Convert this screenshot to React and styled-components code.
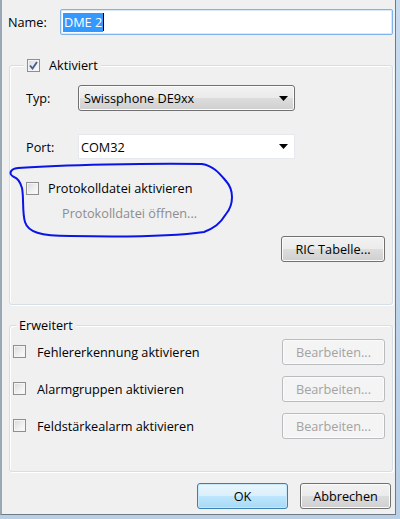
import React from 'react';
import styled, { createGlobalStyle } from 'styled-components';

const Global = createGlobalStyle`
  html, body {
    margin: 0;
    padding: 0;
    background: #f0f0f0;
  }
  body {
    font-family: "Open Sans", "Liberation Sans", Arial, sans-serif;
    font-size: 12.7px;
    color: #000;
  }
`;

const Frame = styled.div`
  width: 400px;
  height: 519px;
  box-sizing: border-box;
  display: flex;
  padding: 0 4px 4px 0;
  background: linear-gradient(180deg, #c9dcef, #b8cfe6);
`;

const Client = styled.div`
  position: relative;
  flex: 1;
  display: flex;
  flex-direction: column;
  box-sizing: border-box;
  padding: 9px 2px 0 6px;
  background: #f0f0f0;
  border-left: 2px solid #9aa8b5;
  border-right: 1px solid #6e7a85;
  border-bottom: 1px solid #6e7a85;
`;

const Row = styled.div`
  display: flex;
  align-items: center;
  height: ${p => p.h || 26}px;
  margin-top: ${p => p.mt || 0}px;
`;

const Label = styled.span`
  width: ${p => p.w}px;
  flex: none;
`;

const TextInput = styled.div`
  flex: 1;
  height: 26px;
  box-sizing: border-box;
  display: flex;
  align-items: center;
  padding-left: 2px;
  background: #fff;
  border: 1px solid #7eb4ea;
  box-shadow: inset 0 0 0 1px #d7e8f8;
  border-radius: 2px;
`;

const Selected = styled.span`
  background: #3399ff;
  color: #fff;
  padding: 1px 1px 2px;
  line-height: 16px;
`;

const Caret = styled.span`
  width: 1px;
  height: 18px;
  background: #000;
`;

const Group = styled.div`
  position: relative;
  margin-top: ${p => p.mt}px;
  margin-left: ${p => p.ml || 0}px;
  width: ${p => p.w}px;
  box-sizing: border-box;
  border: 1px solid #d5dfe5;
  border-radius: 3px;
  box-shadow: inset 1px 1px 0 #fff, 1px 1px 0 #fff;
  padding: ${p => p.pad};
  display: flex;
  flex-direction: column;
`;

const Caption = styled.div`
  position: absolute;
  top: -9px;
  left: ${p => p.left}px;
  display: flex;
  align-items: center;
  gap: 9px;
  height: 16px;
  padding: 0 3px;
  background: #f0f0f0;
`;

const Box = styled.span`
  width: 13px;
  height: 13px;
  flex: none;
  box-sizing: border-box;
  display: flex;
  align-items: center;
  justify-content: center;
  border: 1px solid #8e8f8f;
  background: linear-gradient(135deg, #d9d9d9 0%, #f1f1f1 60%, #fdfdfd 100%);
  box-shadow: inset 0 0 0 1px #f4f4f4;
`;

const CheckRow = styled.label`
  display: flex;
  align-items: center;
  gap: ${p => p.gap || 9}px;
  height: 16px;
  margin-top: ${p => p.mt || 0}px;
`;

const Check = ({ checked }) => (
  <Box>
    {checked && (
      <svg width="9" height="9" viewBox="0 0 9 9">
        <path d="M1 4.5 L3.5 7.5 L8 1" fill="none" stroke="#4a5d94" strokeWidth="1.9" />
      </svg>
    )}
  </Box>
);

const Arrow = () => (
  <svg width="9" height="5" viewBox="0 0 9 5">
    <path d="M0 0 H9 L4.5 5 Z" fill="#000" />
  </svg>
);

const DropButton = styled.div`
  width: 217px;
  height: 26px;
  box-sizing: border-box;
  display: flex;
  align-items: center;
  justify-content: space-between;
  padding: 0 6px 0 5px;
  border: 1px solid #707070;
  border-radius: 3px;
  background: linear-gradient(180deg, #f2f2f2 0%, #ebebeb 50%, #dddddd 51%, #cfcfcf 100%);
  box-shadow: inset 0 0 0 1px #fcfcfc;
`;

const Combo = styled.div`
  width: 217px;
  height: 25px;
  box-sizing: border-box;
  display: flex;
  align-items: center;
  justify-content: space-between;
  padding: 0 6px 0 2px;
  background: #fff;
  border: 1px solid #e6eaee;
`;

const Muted = styled.div`
  color: #8d8d8d;
  margin: ${p => p.m};
  height: 18px;
  display: flex;
  align-items: center;
`;

const Button = styled.button`
  font: inherit;
  width: ${p => p.w || 91}px;
  height: 26px;
  padding: 0;
  flex: none;
  color: ${p => (p.disabled ? '#a3a3a3' : '#000')};
  border: 1px solid ${p => (p.primary ? '#3c7fb1' : p.disabled ? '#b9bcbf' : '#707070')};
  border-radius: 3px;
  background: ${p =>
    p.disabled
      ? '#f4f4f4'
      : p.primary
      ? 'linear-gradient(180deg, #eaf6fd 0%, #d9f0fc 50%, #bee6fd 51%, #a7d9f5 100%)'
      : 'linear-gradient(180deg, #f2f2f2 0%, #ebebeb 50%, #dddddd 51%, #cfcfcf 100%)'};
  box-shadow: inset 0 0 0 1px ${p => (p.primary ? '#c6e8fa' : '#fbfbfb')};
  align-self: ${p => p.align || 'auto'};
  margin: ${p => p.m || 0};
`;

const OptRow = styled.div`
  display: flex;
  align-items: center;
  justify-content: space-between;
  height: 25px;
  margin-top: ${p => p.mt || 0}px;
`;

const Footer = styled.div`
  display: flex;
  justify-content: flex-end;
  gap: 12px;
  margin-top: 11px;
  margin-right: 2px;
`;

const Scribble = styled.svg`
  position: absolute;
  left: -2px;
  top: 0;
  pointer-events: none;
`;

const options = ['Fehlererkennung aktivieren', 'Alarmgruppen aktivieren', 'Feldstärkealarm aktivieren'];

export default function App() {
  return (
    <Frame>
      <Global />
      <Client>
        <Row>
          <Label w={52}>Name:</Label>
          <TextInput>
            <Selected>DME 2</Selected>
            <Caret />
          </TextInput>
        </Row>

        <Group mt={30} ml={1} w={384} pad="19px 0 42px 16px">
          <Caption left={14}>
            <Check checked />
            <span>Aktiviert</span>
          </Caption>
          <Row>
            <Label w={52}>Typ:</Label>
            <DropButton>
              <span>Swissphone DE9xx</span>
              <Arrow />
            </DropButton>
          </Row>
          <Row h={25} mt={23}>
            <Label w={52}>Port:</Label>
            <Combo>
              <span>COM32</span>
              <Arrow />
            </Combo>
          </Row>
          <CheckRow mt={21}>
            <Check />
            <span>Protokolldatei aktivieren</span>
          </CheckRow>
          <Muted m="8px 0 0 36px">Protokolldatei öffnen...</Muted>
          <Button w={104} align="flex-end" m="14px 7px 0 0">RIC Tabelle...</Button>
        </Group>

        <Group mt={20} ml={1} w={384} pad="13px 7px 33px 3px">
          <Caption left={6}>
            <span>Erweitert</span>
          </Caption>
          {options.map((text, i) => (
            <OptRow key={text} mt={i === 0 ? 0 : 12}>
              <CheckRow gap={11}>
                <Check />
                <span>{text}</span>
              </CheckRow>
              <Button w={103} disabled>Bearbeiten...</Button>
            </OptRow>
          ))}
        </Group>

        <Footer>
          <Button primary>OK</Button>
          <Button>Abbrechen</Button>
        </Footer>

        <Scribble width="400" height="519" viewBox="0 0 400 519">
          <path
            d="M14 177 C8 174 10 169 18 168 C60 165 150 163 202 164 C214 166 220 174 226 181 C234 190 234 204 226 214 C220 224 214 228 204 232 C170 237 120 237 70 236 C40 236 28 232 25 222 C22 212 24 198 22 188 C20 181 17 178 14 177"
            fill="none"
            stroke="#0a14e6"
            strokeWidth="2"
            strokeLinecap="round"
          />
        </Scribble>
      </Client>
    </Frame>
  );
}
